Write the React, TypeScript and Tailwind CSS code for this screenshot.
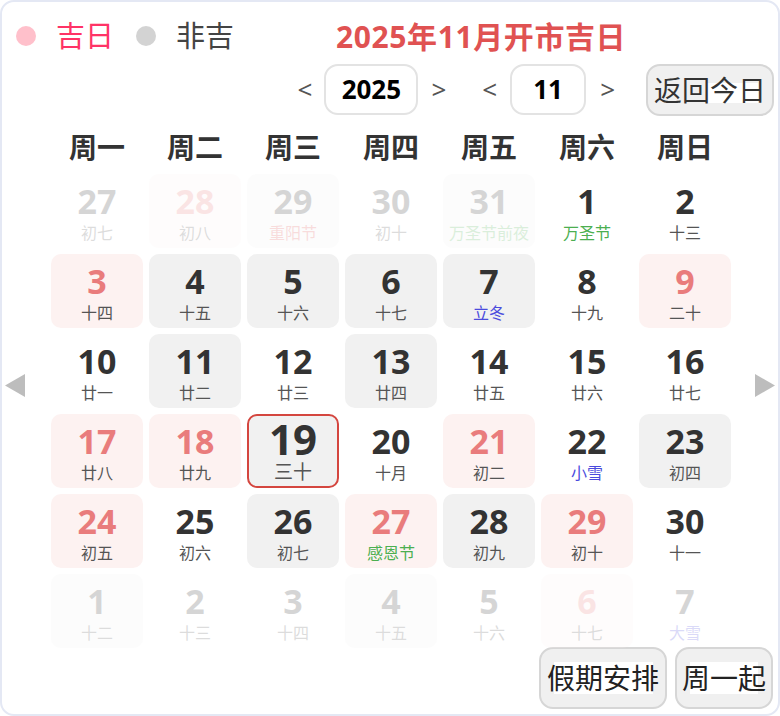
import React from 'react';

type Day = {
  d: number;
  l: string;
  bg?: 'gray' | 'pink';
  lc?: 'green' | 'blue' | 'red';
  other?: boolean;
  today?: boolean;
};

const days: Day[] = [
  // 10月末
  { d: 27, l: '初七', other: true },
  { d: 28, l: '初八', bg: 'pink', other: true },
  { d: 29, l: '重阳节', bg: 'gray', lc: 'red', other: true },
  { d: 30, l: '初十', other: true },
  { d: 31, l: '万圣节前夜', bg: 'gray', lc: 'green', other: true },
  { d: 1, l: '万圣节', lc: 'green' },
  { d: 2, l: '十三' },
  { d: 3, l: '十四', bg: 'pink' },
  { d: 4, l: '十五', bg: 'gray' },
  { d: 5, l: '十六', bg: 'gray' },
  { d: 6, l: '十七', bg: 'gray' },
  { d: 7, l: '立冬', bg: 'gray', lc: 'blue' },
  { d: 8, l: '十九' },
  { d: 9, l: '二十', bg: 'pink' },
  { d: 10, l: '廿一' },
  { d: 11, l: '廿二', bg: 'gray' },
  { d: 12, l: '廿三' },
  { d: 13, l: '廿四', bg: 'gray' },
  { d: 14, l: '廿五' },
  { d: 15, l: '廿六' },
  { d: 16, l: '廿七' },
  { d: 17, l: '廿八', bg: 'pink' },
  { d: 18, l: '廿九', bg: 'pink' },
  { d: 19, l: '三十', bg: 'gray', today: true },
  { d: 20, l: '十月' },
  { d: 21, l: '初二', bg: 'pink' },
  { d: 22, l: '小雪', lc: 'blue' },
  { d: 23, l: '初四', bg: 'gray' },
  { d: 24, l: '初五', bg: 'pink' },
  { d: 25, l: '初六' },
  { d: 26, l: '初七', bg: 'gray' },
  { d: 27, l: '感恩节', bg: 'pink', lc: 'green' },
  { d: 28, l: '初九', bg: 'gray' },
  { d: 29, l: '初十', bg: 'pink' },
  { d: 30, l: '十一' },
  // 12月初
  { d: 1, l: '十二', bg: 'gray', other: true },
  { d: 2, l: '十三', other: true },
  { d: 3, l: '十四', other: true },
  { d: 4, l: '十五', bg: 'gray', other: true },
  { d: 5, l: '十六', other: true },
  { d: 6, l: '十七', bg: 'pink', other: true },
  { d: 7, l: '大雪', lc: 'blue', other: true },
];

const weekdays = ['周一', '周二', '周三', '周四', '周五', '周六', '周日'];

const lunarColor = (lc?: Day['lc']) => {
  if (lc === 'green') return 'text-[#4caf50]';
  if (lc === 'blue') return 'text-[#4b4bdd]';
  if (lc === 'red') return 'text-[#e05555]';
  return 'text-[#555]';
};

const DayCell = ({ day }: { day: Day }) => {
  const bg = day.bg === 'gray' ? 'bg-[#f1f1f1]' : day.bg === 'pink' ? 'bg-[#fdf2f1]' : '';
  const num = day.bg === 'pink' ? 'text-[#e97c7c]' : 'text-[#333]';

  if (day.today) {
    return (
      <div className={`flex flex-col items-center rounded-[10px] border-2 border-[#d4463f] ${bg}`}>
        <div className={`text-[42px] font-bold leading-[46px] ${num}`}>{day.d}</div>
        <div className="text-[19px] leading-[20px] text-[#555]">{day.l}</div>
      </div>
    );
  }

  return (
    <div className={`flex flex-col items-center rounded-[10px] pt-[9px] ${bg} ${day.other ? 'opacity-20' : ''}`}>
      <div className={`text-[34px] font-bold leading-[36px] ${num}`}>{day.d}</div>
      <div className={`mt-[3px] whitespace-nowrap text-[16px] leading-[22px] ${lunarColor(day.lc)}`}>{day.l}</div>
    </div>
  );
};

const Arrow = ({ dir }: { dir: 'left' | 'right' }) => (
  <svg width="20" height="23" viewBox="0 0 20 23">
    <polygon points={dir === 'left' ? '20,0 20,23 0,11.5' : '0,0 0,23 20,11.5'} fill="#bdbdbd" />
  </svg>
);

export default function App() {
  return (
    <div
      className="box-border h-[716px] w-[780px] overflow-hidden rounded-[14px] border-2 border-[#e4e8f4] bg-white"
      style={{ fontFamily: '"Noto Sans", "Noto Sans CJK SC", sans-serif' }}
    >
      {/* legend + title */}
      <div className="mt-[12px] flex h-[44px] items-center pl-[14px]">
        <span className="h-5 w-5 rounded-full bg-[#ffc0cb]" />
        <span className="ml-[20px] text-[29px] text-[#ff3366]">吉日</span>
        <span className="ml-[22px] h-5 w-5 rounded-full bg-[#d3d3d3]" />
        <span className="ml-[20px] text-[29px] text-[#444]">非吉</span>
        <span className="ml-[102px] text-[30px] font-bold tracking-[0.6px] text-[#e05252]">2025年11月开市吉日</span>
      </div>

      {/* year / month pickers */}
      <div className="mt-[5px] flex h-[53px] items-center justify-end pr-[4px] text-[#555]">
        <span className="text-[26px]">&lt;</span>
        <div className="ml-[12px] flex h-[51px] w-[94px] items-center justify-center rounded-[14px] border-2 border-[#e3e3e3] text-[26px] font-bold text-black">
          2025
        </div>
        <span className="ml-[13px] text-[26px]">&gt;</span>
        <span className="ml-[36px] text-[26px]">&lt;</span>
        <div className="ml-[13px] flex h-[51px] w-[76px] items-center justify-center rounded-[14px] border-2 border-[#e3e3e3] text-[26px] font-bold text-black">
          11
        </div>
        <span className="ml-[14px] text-[26px]">&gt;</span>
        <button className="ml-[31px] flex h-[52px] w-[128px] items-center justify-center rounded-[14px] border-2 border-[#d6d6d6] bg-[#f0f0f0] bg-[linear-gradient(#fff,#fff)] bg-[length:52px_20px] bg-[position:58px_17px] bg-no-repeat text-[28px] text-[#333]">
          返回今日
        </button>
      </div>

      {/* weekdays */}
      <div className="mt-[8px] ml-[49px] grid h-[46px] w-[680px] grid-cols-7 items-center gap-x-[6px]">
        {weekdays.map(w => (
          <div key={w} className="text-center text-[28px] font-bold text-[#333]">
            {w}
          </div>
        ))}
      </div>

      {/* month grid */}
      <div className="mt-[4px] flex">
        <div className="w-[49px] pl-[3px] pt-[200px]">
          <Arrow dir="left" />
        </div>
        <div className="grid w-[680px] grid-cols-7 auto-rows-[74px] gap-[6px]">
          {days.map((day, i) => (
            <DayCell key={i} day={day} />
          ))}
        </div>
        <div className="pl-[24px] pt-[200px]">
          <Arrow dir="right" />
        </div>
      </div>

      {/* bottom buttons */}
      <div className="-mt-px flex justify-end gap-[8px] pr-[5px]">
        <button className="flex h-[62px] w-[128px] items-center justify-center rounded-[14px] border-2 border-[#d6d6d6] bg-[#f0f0f0] bg-[linear-gradient(#fff,#fff)] bg-[length:99px_32px] bg-center bg-no-repeat text-[28px] text-[#222]">
          假期安排
        </button>
        <button className="flex h-[62px] w-[98px] items-center justify-center rounded-[14px] border-2 border-[#d6d6d6] bg-[#f0f0f0] bg-[linear-gradient(#fff,#fff)] bg-[length:68px_32px] bg-center bg-no-repeat text-[28px] text-[#222]">
          周一起
        </button>
      </div>
    </div>
  );
}
